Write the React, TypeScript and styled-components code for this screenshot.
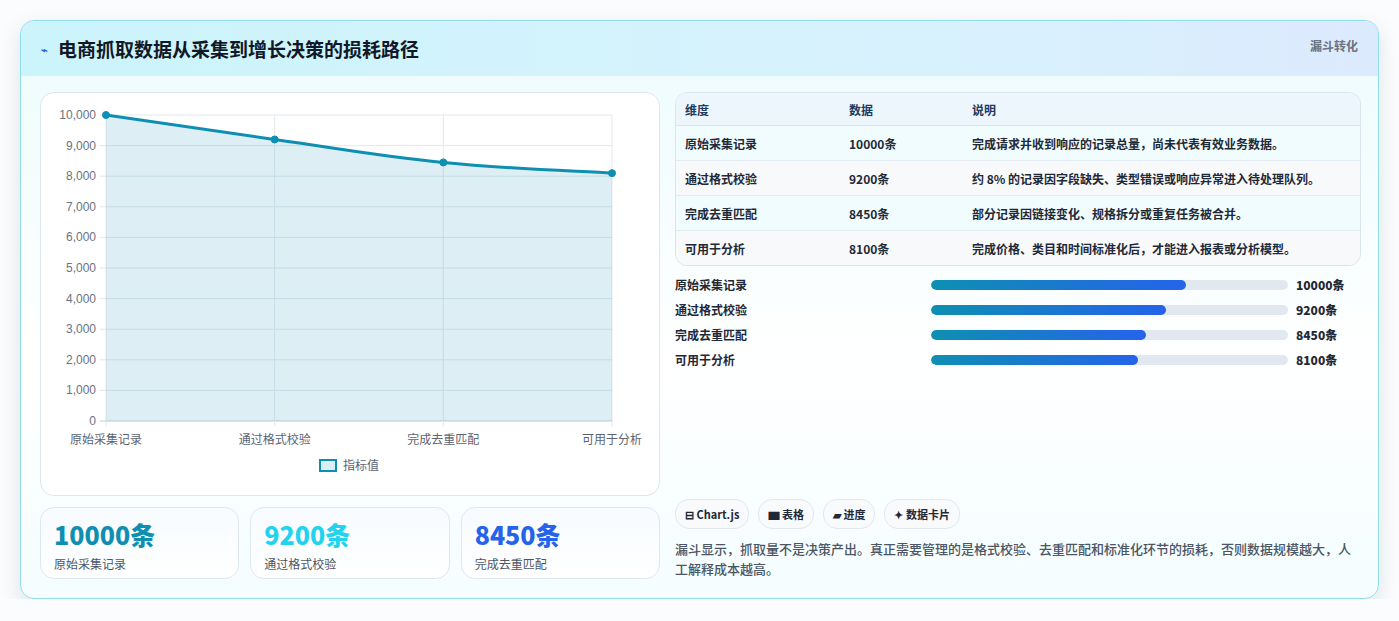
import React from "react";
import styled, { createGlobalStyle } from "styled-components";

const rows = [
  { name: "原始采集记录", value: 10000, note: "完成请求并收到响应的记录总量，尚未代表有效业务数据。" },
  { name: "通过格式校验", value: 9200, note: "约 8% 的记录因字段缺失、类型错误或响应异常进入待处理队列。" },
  { name: "完成去重匹配", value: 8450, note: "部分记录因链接变化、规格拆分或重复任务被合并。" },
  { name: "可用于分析", value: 8100, note: "完成价格、类目和时间标准化后，才能进入报表或分析模型。" },
];

const Global = createGlobalStyle`
  body { margin: 0; background: #fbfcfd; font-family: "Noto Sans CJK SC", "Noto Sans", sans-serif; }
`;

const Card = styled.div`
  margin: 20px 20px 0 20px;
  width: 1357px;
  height: 577px;
  border: 1px solid #8fdde9;
  border-radius: 14px;
  background: linear-gradient(180deg, #ecfbfd 0%, #ffffff 60%, #f4fdff 100%);
  box-shadow: 0 8px 22px rgba(20, 60, 90, 0.12);
  overflow: hidden;
  display: flex;
  flex-direction: column;
`;
const Header = styled.div`
  height: 55px;
  display: flex;
  align-items: center;
  justify-content: space-between;
  padding: 0 20px 0 20px;
  background: linear-gradient(90deg, #cbf4fb 0%, #d8f1fd 70%, #dceafd 100%);
  h1 {
    margin: 0;
    font-size: 19px;
    font-weight: 700;
    color: #111827;
    display: flex;
    align-items: center;
    gap: 10px;
  }
  span.tag {
    align-self: flex-start;
    margin-top: 16px;
    font-size: 12px;
    font-weight: 700;
    color: #6b7280;
  }
`;
const Body = styled.div`
  display: grid;
  grid-template-columns: 620px 686px;
  gap: 15px;
  padding: 16px 19px 0 19px;
`;
const Col = styled.div`
  display: flex;
  flex-direction: column;
`;
const ChartBox = styled.div`
  height: 402px;
  border: 1px solid #dde7f0;
  border-radius: 14px;
  background: #fff;
`;
const Stats = styled.div`
  display: grid;
  grid-template-columns: repeat(3, 1fr);
  gap: 11px;
  margin-top: 11px;
`;
const Stat = styled.div<{ c: string }>`
  height: 72px;
  border: 1px solid #dbe8f3;
  border-radius: 14px;
  background: linear-gradient(180deg, #f7fbff, #ffffff);
  padding: 10px 13px;
  box-sizing: border-box;
  b {
    display: block;
    font-size: 25px;
    line-height: 32px;
    font-weight: 800;
    color: ${(p) => p.c};
  }
  span {
    font-size: 12px;
    color: #4b5563;
  }
`;
const Table = styled.table`
  width: 100%;
  border-collapse: separate;
  border-spacing: 0;
  border: 1px solid #d8e4ee;
  border-radius: 12px;
  overflow: hidden;
  font-size: 12px;
  th {
    text-align: left;
    background: #eef6fd;
    color: #1e3a5f;
    font-weight: 700;
    height: 32px;
    padding: 0 9px;
    border-bottom: 1px solid #d8e4ee;
  }
  td {
    height: 34px;
    padding: 0 9px;
    color: #1f2937;
    font-weight: 600;
    border-bottom: 1px solid #e3ebf2;
  }
  tr:nth-child(odd) td { background: #f0fcfe; }
  tr:nth-child(even) td { background: #f7f9fb; }
  tr:last-child td { border-bottom: none; }
`;
const Bars = styled.div`
  margin-top: 10px;
  display: flex;
  flex-direction: column;
  gap: 8px;
`;
const BarRow = styled.div`
  display: grid;
  grid-template-columns: 248px 357px 1fr;
  align-items: center;
  column-gap: 8px;
  font-size: 12px;
  font-weight: 600;
  color: #1f2937;
  height: 17px;
  b { font-weight: 800; }
`;
const Track = styled.div`
  height: 10px;
  border-radius: 5px;
  background: #e2e8f0;
  overflow: hidden;
`;
const Fill = styled.div`
  height: 100%;
  border-radius: 5px;
  background: linear-gradient(90deg, #0e8fb1, #2563eb);
`;
const Chips = styled.div`
  margin-top: auto;
  display: flex;
  gap: 9px;
`;
const Chip = styled.span`
  height: 28px;
  padding: 0 9px;
  border: 1px solid #e2e8f0;
  border-radius: 14px;
  background: #f8fafc;
  display: flex;
  align-items: center;
  gap: 3px;
  font-size: 11px;
  font-weight: 700;
  color: #1f2937;
`;
const Note = styled.p`
  margin: 10px 0 0 0;
  font-size: 13px;
  line-height: 20px;
  color: #4b5563;
  font-weight: 500;
`;

const Chart = () => {
  const x0 = 65, x1 = 571, yTop = 22, yBot = 328;
  const xs = [0, 1, 2, 3].map((i) => x0 + ((x1 - x0) * i) / 3);
  const y = (v: number) => yBot - ((yBot - yTop) * v) / 10000;
  const pts = rows.map((r, i) => [xs[i], y(r.value)]);
  // gentle curve: control points follow neighbouring slopes
  let line = `M${pts[0][0]},${pts[0][1]}`;
  for (let i = 0; i < pts.length - 1; i++) {
    const p0 = pts[Math.max(i - 1, 0)], p1 = pts[i], p2 = pts[i + 1], p3 = pts[Math.min(i + 2, pts.length - 1)];
    const t = 0.2;
    const c1 = [p1[0] + (p2[0] - p0[0]) * t, p1[1] + (p2[1] - p0[1]) * t];
    const c2 = [p2[0] - (p3[0] - p1[0]) * t, p2[1] - (p3[1] - p1[1]) * t];
    line += ` C${c1[0]},${c1[1]} ${c2[0]},${c2[1]} ${p2[0]},${p2[1]}`;
  }
  return (
    <svg width="620" height="400" viewBox="0 0 620 400" style={{ display: "block" }} fontFamily="'Noto Sans CJK SC', sans-serif">
      {Array.from({ length: 11 }, (_, i) => i * 1000).map((v) => (
        <g key={v}>
          <line x1={x0 - 6} x2={x1} y1={y(v)} y2={y(v)} stroke={v === 0 ? "#c3cbd4" : "#e3e8ee"} />
          <text x={x0 - 10} y={y(v) + 4} fontSize="12" fill="#6b7280" textAnchor="end" fontFamily="'Liberation Sans', sans-serif">
            {v.toLocaleString("en-US")}
          </text>
        </g>
      ))}
      {xs.map((x, i) => (
        <g key={i}>
          <line x1={x} x2={x} y1={yTop} y2={yBot + 5} stroke="#e3e8ee" />
          <text x={x} y={yBot + 23} fontSize="12" fill="#5b6472" textAnchor="middle">{rows[i].name}</text>
        </g>
      ))}
      <path d={`${line} L${x1},${yBot} L${x0},${yBot} Z`} fill="#0e8fb1" fillOpacity="0.14" />
      <path d={line} fill="none" stroke="#0e8fb1" strokeWidth="3" />
      {pts.map(([px, py], i) => (
        <circle key={i} cx={px} cy={py} r="3.5" fill="#0e8fb1" stroke="#0e8fb1" />
      ))}
      <rect x="279" y="367" width="16" height="11" fill="#dbeef5" stroke="#0e8fb1" strokeWidth="2" />
      <text x="302" y="377" fontSize="12" fill="#5b6472">指标值</text>
    </svg>
  );
};

export default function App() {
  return (
    <>
      <Global />
      <Card>
        <Header>
          <h1>
            <span style={{ color: "#2563eb", fontSize: 11 }}>⌁</span>电商抓取数据从采集到增长决策的损耗路径
          </h1>
          <span className="tag">漏斗转化</span>
        </Header>
        <Body>
          <Col>
            <ChartBox>
              <Chart />
            </ChartBox>
            <Stats>
              <Stat c="#0e8fb1"><b>10000条</b><span>原始采集记录</span></Stat>
              <Stat c="#22d3ee"><b>9200条</b><span>通过格式校验</span></Stat>
              <Stat c="#2563eb"><b>8450条</b><span>完成去重匹配</span></Stat>
            </Stats>
          </Col>
          <Col>
            <Table>
              <thead>
                <tr><th style={{ width: 146 }}>维度</th><th style={{ width: 105 }}>数据</th><th>说明</th></tr>
              </thead>
              <tbody>
                {rows.map((r) => (
                  <tr key={r.name}><td>{r.name}</td><td>{r.value}条</td><td>{r.note}</td></tr>
                ))}
              </tbody>
            </Table>
            <Bars>
              {rows.map((r) => (
                <BarRow key={r.name}>
                  <span>{r.name}</span>
                  <Track><Fill style={{ width: `${(r.value / 14000) * 100}%` }} /></Track>
                  <b>{r.value}条</b>
                </BarRow>
              ))}
            </Bars>
            <Chips>
              <Chip>⊟ Chart.js</Chip>
              <Chip>▆ 表格</Chip>
              <Chip>▰ 进度</Chip>
              <Chip>✦ 数据卡片</Chip>
            </Chips>
            <Note>漏斗显示，抓取量不是决策产出。真正需要管理的是格式校验、去重匹配和标准化环节的损耗，否则数据规模越大，人工解释成本越高。</Note>
          </Col>
        </Body>
      </Card>
    </>
  );
}
